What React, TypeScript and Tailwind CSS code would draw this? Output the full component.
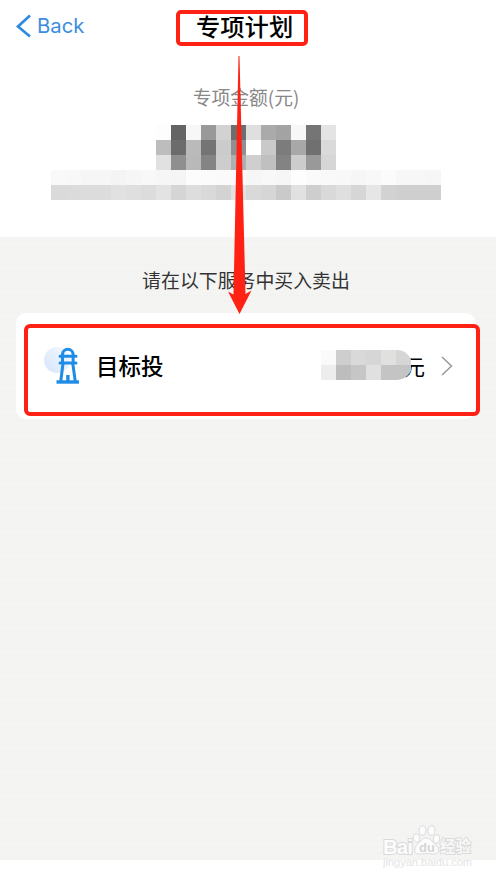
import React from "react";

const AMOUNT_MOSAIC = [
  ["#fdfdfd", "#646464", "#f7f7f7", "#999999", "#d2d2d2", "#6e6e6e", "#dfdfdf", "#aaaaaa", "#a3a3a3", "#f7f7f7", "#757575", "#e4e4e4"],
  ["#bdbdbd", "#6c6c6c", "#bababa", "#747474", "#cbcbcb", "#909090", "#ffffff", "#c9c9c9", "#7c7c7c", "#a8a8a8", "#707070", "#dadada"],
  ["#e1e1e1", "#8f8f8f", "#b9b9b9", "#848484", "#cdcdcd", "#afafaf", "#cfcfcf", "#c0c0c0", "#838383", "#cccccc", "#999999", "#d6d6d6"],
];

const DETAIL_MOSAIC = [
  ["#f9f9f9", "#f8f8f8", "#f6f6f6", "#f6f6f6", "#f4f4f4", "#f6f6f6", "#f8f8f8", "#f6f6f6", "#f5f5f5", "#fcfcfc", "#fbfbfb", "#fafafa", "#f9f9f9", "#f6f6f6", "#f8f8f8", "#f6f6f6", "#fdfdfd", "#fafafa", "#f9f9f9", "#f8f8f8", "#f6f6f6", "#f8f8f8", "#fbfbfb", "#f7f7f7", "#f7f7f7", "#f6f6f6"],
  ["#dadada", "#dbdbdb", "#dcdcdc", "#dcdcdc", "#e1e1e1", "#dfdfdf", "#dcdcdc", "#e3e3e3", "#d5d5d5", "#dddddd", "#d9d9d9", "#d3d3d3", "#e2e2e2", "#d9d9d9", "#d6d6d6", "#cacaca", "#e1e1e1", "#cecece", "#d9d9d9", "#dfdfdf", "#d6d6d6", "#e6e6e6", "#d2d2d2", "#cfcfcf", "#cfcfcf", "#cfcfcf"],
];

const BALANCE_MOSAIC = [
  ["#fafafa", "#cecece", "#d9d9d9", "#d6d6d6", "#e0e0de", "#d6d6d6"],
  ["#ededed", "#bdbdbd", "#c6c6c6", "#e0e0e0", "#c4c4c4", "#c4c4c4"],
];

function Mosaic({ rows, className = "" }: { rows: string[][]; className?: string }) {
  return (
    <div className={`overflow-hidden ${className}`}>
      {rows.map((row, y) => (
        <div key={y} className="flex">
          {row.map((color, x) => (
            <div key={x} className="h-[15px] w-[15px] shrink-0" style={{ backgroundColor: color }} />
          ))}
        </div>
      ))}
    </div>
  );
}

function Lighthouse() {
  return (
    <svg width="40" height="42" viewBox="0 0 40 42" fill="none">
      <defs>
        <linearGradient id="glow" x1="0" y1="1" x2="1" y2="0">
          <stop offset="0" stopColor="#d6e6fc" />
          <stop offset="1" stopColor="#f4f8ff" />
        </linearGradient>
      </defs>
      <circle cx="13" cy="15" r="13" fill="url(#glow)" />
      <g stroke="#1f8de6" strokeWidth="3">
        <path d="M18.5 18V9.5a5.3 5.3 0 0 1 10.6 0V18" />
        <path d="M16 11.3h16M16 18h16" strokeLinecap="round" />
        <path d="M19 18.5L16.800 36M28.8 18.5L31.200 36" />
        <path d="M12.5 37h22.5" strokeWidth="3.4" />
        <path d="M23.9 30v7" strokeWidth="3.4" />
      </g>
    </svg>
  );
}

function BaiduMark() {
  return (
    <div className="absolute left-[383px] top-[824px] h-[45px] w-[95px]">
      <svg
        width="95"
        height="45"
        viewBox="0 0 95 45"
        fill="#fcfcfc"
        stroke="#dadada"
        strokeWidth="1"
        fontFamily="'Liberation Sans', 'Noto Sans CJK SC', sans-serif"
        fontWeight="bold"
      >
        <ellipse cx="33.5" cy="14" rx="3.2" ry="4.3" transform="rotate(-12 33.5 14)" />
        <ellipse cx="39.5" cy="6.5" rx="3.5" ry="4.8" />
        <ellipse cx="48.5" cy="6.5" rx="3.5" ry="4.8" transform="rotate(8 48.5 6.5)" />
        <ellipse cx="53.5" cy="15" rx="3.2" ry="4.3" transform="rotate(10 53.5 15)" />
        <path d="M43 14c-4 0-5 3.500-8.5 6.5-4 3.5-4 9 1 9.5 3 .4 5-.5 8-.5s5 1 8 .5c5-.8 5-6 1-9.500-3.500-3-5-6.500-9.500-6.500z" />
        <text x="0" y="30" fontSize="20.5" textLength="30" paintOrder="stroke" strokeWidth="2">Bai</text>
        <text x="36" y="27.5" fontSize="13" fill="#d4d4d4" stroke="none">du</text>
        <text x="57" y="28" fontSize="15.5" textLength="31" fill="#f8f8f8" paintOrder="stroke" strokeWidth="1.8">经验</text>
        <text x="0" y="41.5" fontSize="10.5" fontWeight="normal" textLength="89" lengthAdjust="spacingAndGlyphs" fill="#e4e4e4" stroke="none">jingyan.baidu.com</text>
      </svg>
    </div>
  );
}

export default function App() {
  return (
    <div className="relative h-[879px] w-[500px] overflow-hidden bg-white font-['Liberation_Sans','Noto_Sans_CJK_SC',sans-serif]">
      <header className="grid h-[53px] grid-cols-[177px_131px_1fr] items-center">
        <button className="-mt-px flex items-center gap-[6px] pl-[15px] text-[#3a8de0]">
          <svg width="16" height="24" viewBox="0 0 16 24" fill="none" stroke="#2f8be0" strokeWidth="2.7">
            <path d="M15 1.5L3 12.5l12 10" />
          </svg>
          <span className="font-['Inter',sans-serif] text-[20.3px] leading-6">Back</span>
        </button>
        <h1 className="-mt-px pl-[19px] font-['Noto_Sans_CJK_SC',sans-serif] text-[24.3px] font-medium leading-9 text-black">
          专项计划
        </h1>
      </header>

      <section className="flex h-[184px] flex-col items-center pr-2">
        <p className="mt-[30px] h-[28px] font-['Noto_Sans_CJK_SC',sans-serif] text-[18.8px] leading-[28px] text-[#888888]">
          专项金额(元)
        </p>
        <Mosaic rows={AMOUNT_MOSAIC} className="mt-[14px] w-[180px]" />
        <Mosaic rows={DETAIL_MOSAIC} className="w-[390px] rounded-tl-[4px]" />
      </section>

      <main className="flex h-[623px] w-[496px] flex-col bg-[#f4f4f3] bg-[repeating-linear-gradient(0deg,#f2f2f1_0px,#f4f4f3_2px,#f4f4f3_6px)] pl-4 pr-5">
        <p className="mt-[29px] h-[28px] text-center font-['Noto_Sans_CJK_SC',sans-serif] text-[18.9px] leading-[28px] text-[#333333]">
          请在以下服务中买入卖出
        </p>
        <div className="mt-[19px] flex h-[106px] items-center rounded-[10px] bg-white pl-7 pr-[22px]">
          <Lighthouse />
          <span className="-mt-[2px] ml-[12px] font-['Noto_Sans_CJK_SC',sans-serif] text-[22.5px] font-medium leading-8 text-black">
            目标投
          </span>
          <div className="ml-auto flex items-center">
            <Mosaic rows={BALANCE_MOSAIC} className="z-[1] -mt-[3px] w-[91px] rounded-r-[15px]" />
            <span className="-ml-[9px] -mt-[2px] font-['Noto_Sans_CJK_SC',sans-serif] text-[22px] leading-8 text-black">元</span>
            <svg className="ml-[15px]" width="14" height="22" viewBox="0 0 14 22" fill="none" stroke="#999999" strokeWidth="1.5">
              <path d="M2 2l9.5 9L2 20" />
            </svg>
          </div>
        </div>
      </main>

      <BaiduMark />

      {/* red markers over the page */}
      <div className="absolute left-[176px] top-[10px] h-[36px] w-[132px] rounded-[5px] border-4 border-[#ff2114]" />
      <div className="absolute left-[24px] top-[324px] h-[92px] w-[456px] rounded-[6px] border-4 border-[#ff2114]" />
      <svg className="absolute left-[224px] top-[56px]" width="30" height="260" viewBox="0 0 30 260" fill="#ff2114">
        <path d="M14.5 0h1L21.5 238l6-3.5L15.5 258 4 235.5l5.5 3z" />
      </svg>
    </div>
  );
}
